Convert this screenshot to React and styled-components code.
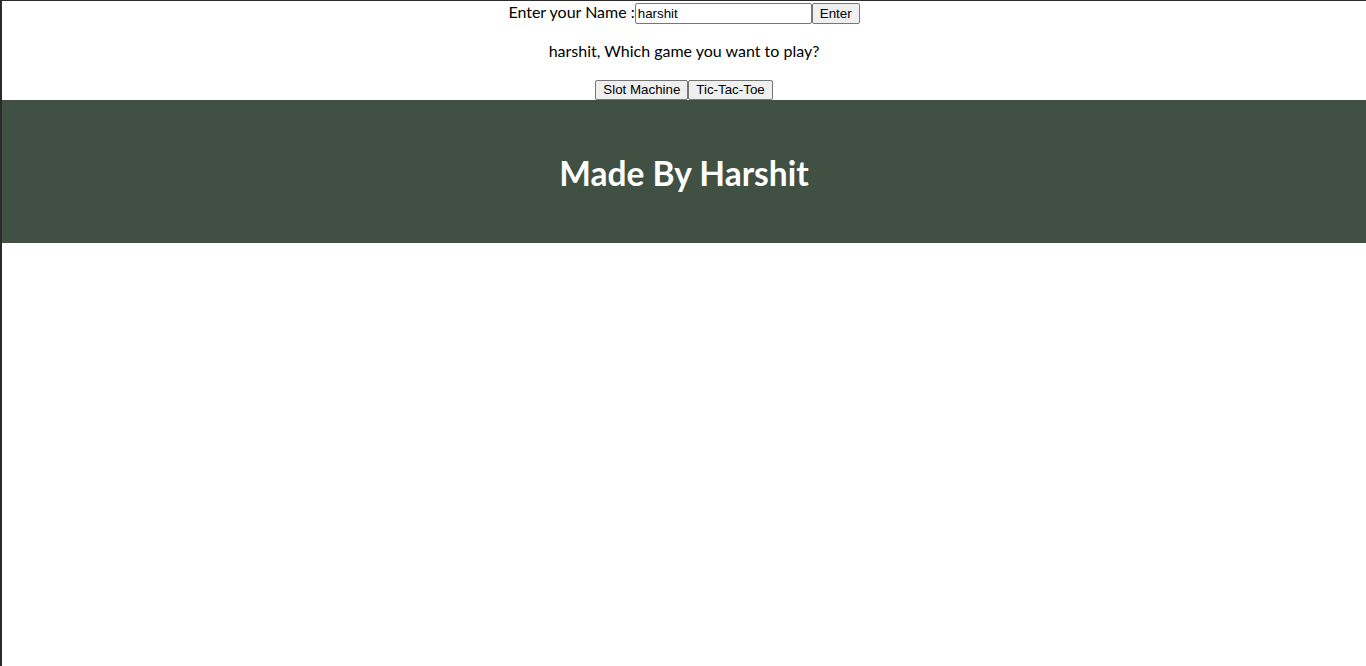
import { useState } from 'react';
import styled, { createGlobalStyle } from 'styled-components';

const GlobalStyle = createGlobalStyle`
    html, body {
        margin: 0;
        padding: 0;
    }

    body {
        min-height: 100vh;
        box-sizing: border-box;
        background: #fff;
        border-left: 2px solid #2b2b2b;
        border-top: 1px solid #2b2b2b;
        font-family: Lato, "Noto Sans", sans-serif;
        color: #000;
    }
`;

const Page = styled.div`
    text-align: center;
`;

const NameRow = styled.div`
    font-size: 16px;
    line-height: 22px;
    height: 23px;
`;

const NameInput = styled.input`
    box-sizing: border-box;
    width: 177px;
    height: 21px;
    padding: 1px 2px;
    border: 1px solid #767676;
    border-radius: 2px;
    font-family: "Liberation Sans", Arial, sans-serif;
    font-size: 13.33px;
    vertical-align: baseline;
`;

const Button = styled.button`
    box-sizing: border-box;
    height: ${({ $tall }) => ($tall ? '21px' : '20px')};
    padding: 1px 7px;
    background: #efefef;
    border: 1px solid #767676;
    border-radius: 2px;
    font-family: "Liberation Sans", Arial, sans-serif;
    font-size: 13.33px;
    color: #000;
    cursor: pointer;
    vertical-align: baseline;
`;

const Question = styled.p`
    margin: 16px 0 15px;
    font-size: 16px;
    line-height: 22px;
`;

const GameRow = styled.div`
    font-size: 16px;
    line-height: 22px;
    height: 23px;
`;

const Footer = styled.footer`
    background: #405042;
    padding: 52px 0 48px;
`;

const FooterTitle = styled.h1`
    margin: 0;
    font-size: 33.5px;
    line-height: 43px;
    font-weight: 700;
    color: #fff;
`;

export default function App() {
    const [name, setName] = useState('harshit');

    return (
        <Page>
            <GlobalStyle />
            <NameRow>
                Enter your Name :
                <NameInput value={name} onChange={(e) => setName(e.target.value)} />
                <Button $tall>Enter</Button>
            </NameRow>
            <Question>{name}, Which game you want to play?</Question>
            <GameRow>
                <Button>Slot Machine</Button>
                <Button>Tic-Tac-Toe</Button>
            </GameRow>
            <Footer>
                <FooterTitle>Made By Harshit</FooterTitle>
            </Footer>
        </Page>
    );
}
